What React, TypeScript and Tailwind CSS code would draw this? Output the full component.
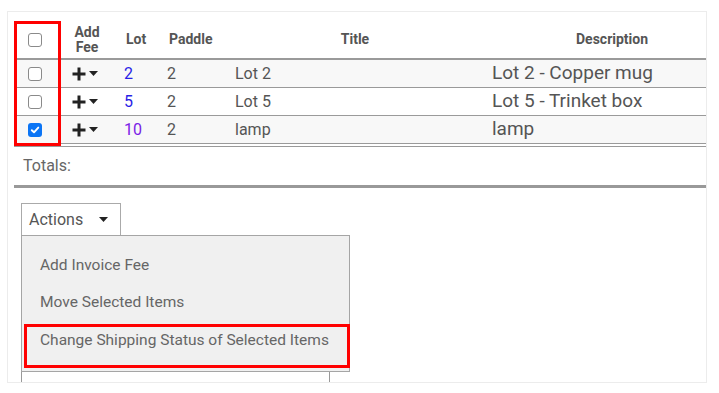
import React from "react";

function Checkbox({ checked }: { checked?: boolean }) {
  if (checked) {
    return (
      <div className="w-[14px] h-[14px] rounded-[3px] bg-[#0b75f5] flex items-center justify-center">
        <svg width="10" height="10" viewBox="0 0 10 10">
          <path d="M1.8 5.2 L4 7.3 L8.3 2.6" fill="none" stroke="white" strokeWidth="1.9" strokeLinecap="round" strokeLinejoin="round" />
        </svg>
      </div>
    );
  }
  return <div className="w-[14px] h-[14px] rounded-[3px] border border-[#8a8a8a] bg-white" />;
}

function AddFee() {
  return (
    <div className="flex items-center gap-[3px]">
      <svg width="14" height="14" viewBox="0 0 14 14">
        <path d="M7 0.5 V13.5 M0.5 7 H13.5" stroke="#222" strokeWidth="3" />
      </svg>
      <svg width="9" height="5" viewBox="0 0 9 5">
        <path d="M0 0 H9 L4.5 5 Z" fill="#222" />
      </svg>
    </div>
  );
}

const rows = [
  { lot: "2", lotColor: "text-[#2a1ee6]", paddle: "2", title: "Lot 2", desc: "Lot 2 - Copper mug", checked: false, bg: "bg-[#f8f8f8]" },
  { lot: "5", lotColor: "text-[#2a1ee6]", paddle: "2", title: "Lot 5", desc: "Lot 5 - Trinket box", checked: false, bg: "bg-white" },
  { lot: "10", lotColor: "text-[#7a22e6]", paddle: "2", title: "lamp", desc: "lamp", checked: true, bg: "bg-[#f8f8f8]" },
];

export default function App() {
  return (
    <div className="w-[719px] h-[393px] bg-white pt-[11px] pl-[7px]" style={{ fontFamily: "Roboto, 'Noto Sans', sans-serif" }}>
      <div className="relative w-[700px] h-[372px] border border-[#ececec] overflow-hidden pt-[9px] pl-[6px]">
        {/* Table */}
        <div className="relative w-[693px]">
          {/* header */}
          <div className="flex h-[39px] items-center border-b-2 border-[#9a9a9a] text-[14px] font-bold text-[#555] leading-[15px]">
            <div className="w-[47px] flex justify-center pr-[6px]"><Checkbox /></div>
            <div className="w-[54px] text-center pr-[2px]">Add<br />Fee</div>
            <div className="w-[45px] pl-[11px]">Lot</div>
            <div className="w-[65px] pl-[9px]">Paddle</div>
            <div className="w-[260px] text-center">Title</div>
            <div className="flex-1 pl-[91px]">Description</div>
          </div>
          {rows.map((r, i) => (
            <div key={i} className={`flex h-[28px] items-center border-b border-[#9a9a9a] ${r.bg}`}>
              <div className="w-[47px] flex justify-center pr-[6px]"><Checkbox checked={r.checked} /></div>
              <div className="w-[54px] pl-[11px]"><AddFee /></div>
              <div className={`w-[45px] pl-[9px] text-[16px] ${r.lotColor}`}>{r.lot}</div>
              <div className="w-[65px] pl-[7px] text-[16px] text-[#555]">{r.paddle}</div>
              <div className="w-[257px] pl-[10px] text-[16px] text-[#555]">{r.title}</div>
              <div className="flex-1 pl-[10px] text-[19px] text-[#555]">{r.desc}</div>
            </div>
          ))}
          <div className="h-[2px]" />
          <div className="border-t border-[#9a9a9a] h-[39px] flex items-center pl-[9px] text-[16px] text-[#666]">Totals:</div>
          <div className="h-[3px] bg-[#999]" />
          {/* red annotation around checkbox column */}
          <div className="absolute left-0 top-0 w-[47px] h-[125px] border-[3px] border-[#ff0000] pointer-events-none" />
        </div>

        {/* Actions */}
        <div className="pl-[7px] pt-[15px]">
          <div className="w-[100px] h-[32px] border border-b-0 border-[#aaa] bg-white flex items-center pl-[7px] text-[16px] text-[#555]">
            <span>Actions</span>
            <svg className="ml-[16px]" width="9" height="5" viewBox="0 0 9 5">
              <path d="M0 0 H9 L4.5 5 Z" fill="#222" />
            </svg>
          </div>
          <div className="w-[329px] border border-[#a5a5a5] bg-[#f0f0f0] pt-[11px] pb-[3px] text-[15.5px] text-[#666]">
            <div className="h-[37px] flex items-center pl-[18px]">Add Invoice Fee</div>
            <div className="h-[37px] flex items-center pl-[18px]">Move Selected Items</div>
            <div className="relative mt-[3px] h-[44px] flex items-start pt-[5px] pl-[18px]">
              Change Shipping Status of Selected Items
              <div className="absolute left-[2px] right-[-1px] top-0 bottom-0 border-[3px] border-[#ff0000]" />
            </div>
          </div>
          <div className="w-[309px] h-[40px] border-x border-[#999] bg-white" />
        </div>
      </div>
    </div>
  );
}
